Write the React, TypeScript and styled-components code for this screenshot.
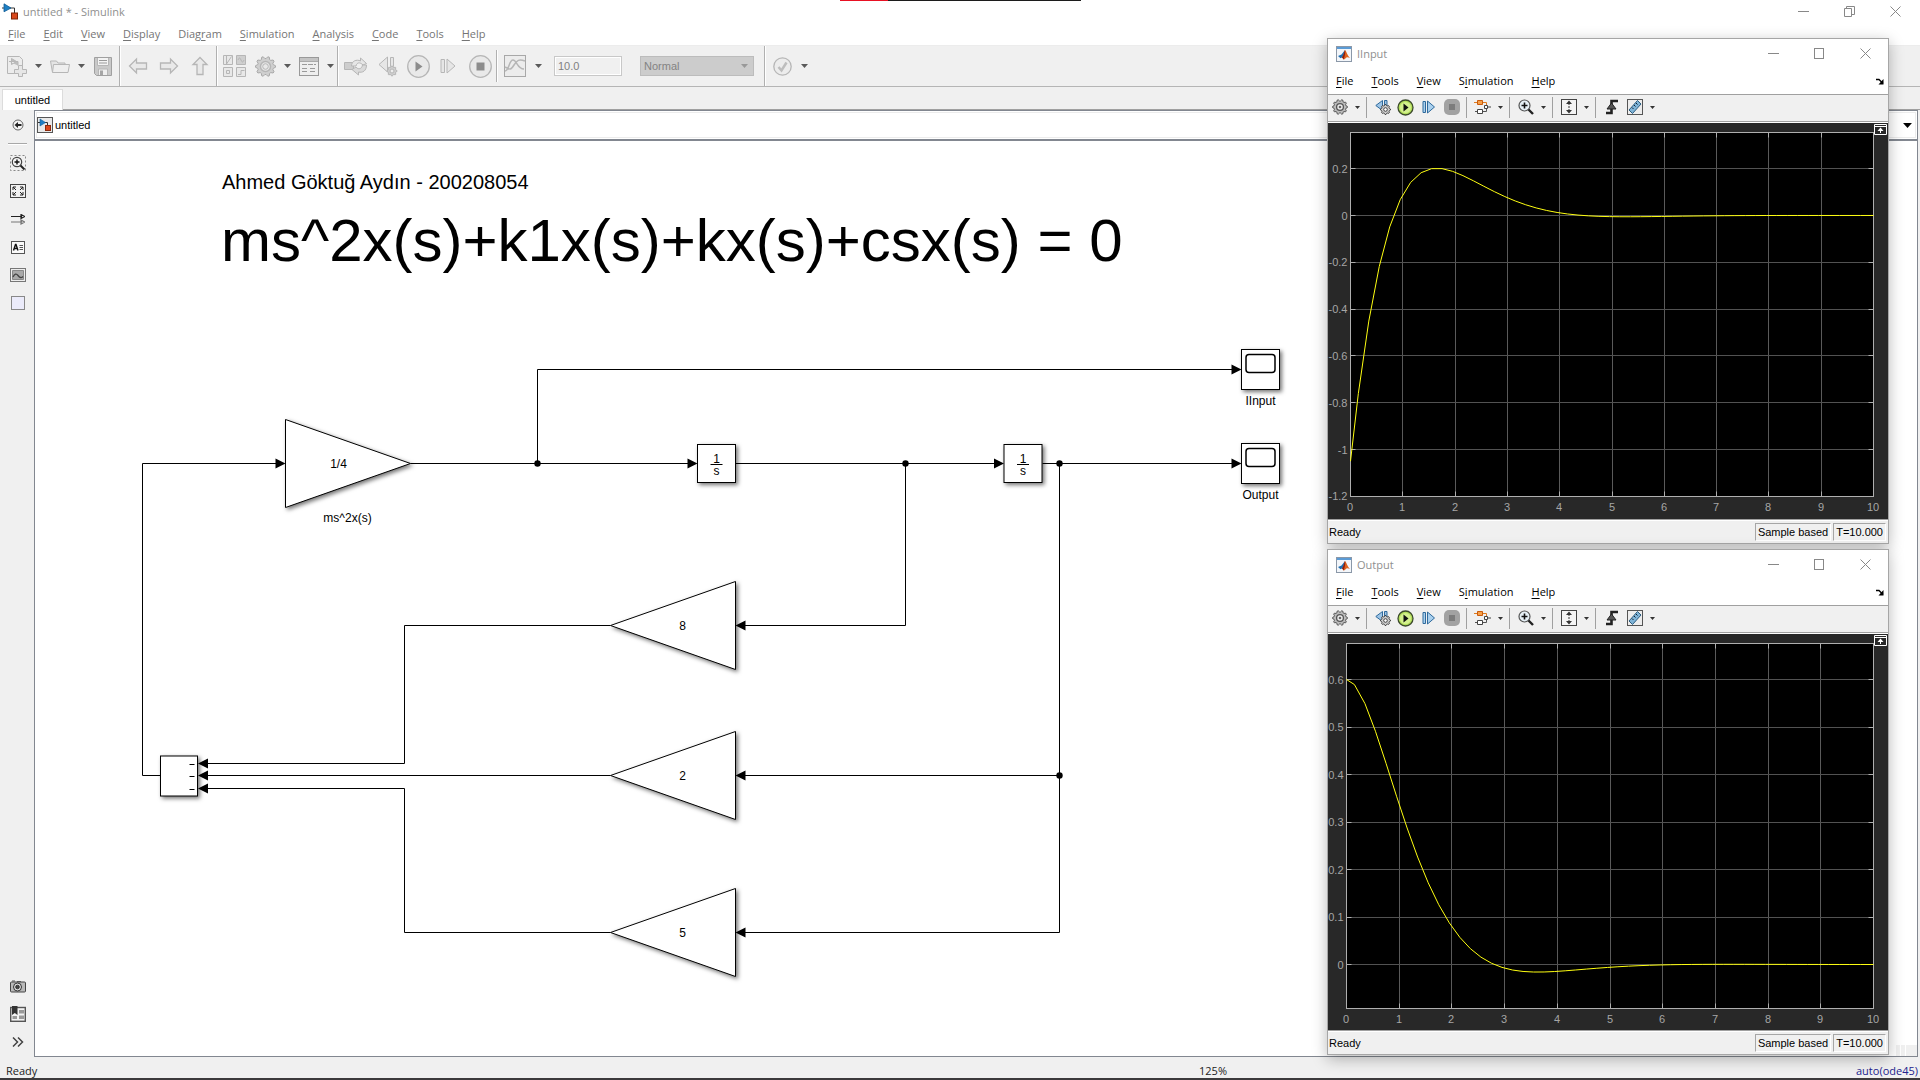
import React from "react";
import styled, { createGlobalStyle } from "styled-components";

const UI_FONT = '"Open Sans", "Noto Sans", sans-serif';
const SMALL_FONT = '"Liberation Sans", Arial, sans-serif';
const FRAME = "#828790";
const FACE = "#f0f0f0";

const GlobalStyle = createGlobalStyle`
  *, *::before, *::after { box-sizing: border-box; }
  body { margin: 0; background: #fff; font-family: ${UI_FONT}; font-size: 11px; overflow: hidden; }
  button, input, select { font: inherit; margin: 0; }
  svg { display: block; flex: none; }
`;

/* ---------- main window ---------- */

const AppWindow = styled.div`
  position: relative;
  display: flex;
  flex-direction: column;
  height: 100vh;
  background: ${FACE};
`;

const TopStrip = styled.div`
  position: absolute;
  top: 0;
  left: 840px;
  display: flex;
  width: 241px;
  height: 1px;
  background: #1c1c1c;
  &::before { content: ""; width: 48px; background: #e81123; }
`;

const TitleBar = styled.header`
  display: flex;
  align-items: center;
  gap: 5px;
  flex: none;
  background: #fff;
  color: #8f8f8f;
  line-height: 16px;
`;

const MainTitle = styled(TitleBar)`
  height: 23px;
  padding: 0 2px;
`;

const ScopeTitle = styled(TitleBar)`
  height: 29px;
  padding: 0 0 0 8px;
`;

const TitleText = styled.h1`
  margin: 0;
  font-size: 11px;
  font-weight: 400;
`;

const WindowButtons = styled.div`
  display: flex;
  margin-left: auto;
`;

const WindowButton = styled.button`
  display: flex;
  align-items: center;
  justify-content: center;
  width: 46px;
  height: 20px;
  padding: 0;
  border: 0;
  background: none;
`;

const MenuBar = styled.nav<{ $main?: boolean }>`
  display: flex;
  align-items: center;
  gap: 2px;
  flex: none;
  height: ${(p) => (p.$main ? 23 : 26)}px;
  border-bottom: ${(p) => (p.$main ? "1px solid #ececec" : "0")};
  background: #fff;
  color: ${(p) => (p.$main ? "#757575" : "#000")};
`;

const MenuItem = styled.button`
  padding: 0 8px;
  border: 0;
  background: none;
  color: inherit;
  line-height: 16px;
  u { text-underline-offset: 2px; }
`;

const DockArrow = styled.button`
  margin-left: auto;
  padding: 0 4px;
  border: 0;
  background: none;
`;

const MainToolbar = styled.div`
  display: flex;
  align-items: center;
  flex: none;
  height: 41px;
  padding-left: 1px;
  border-bottom: 1px solid #b5b5b5;
`;

const ToolButton = styled.button<{ $w: number }>`
  display: flex;
  align-items: center;
  justify-content: center;
  flex: none;
  width: ${(p) => p.$w}px;
  height: 24px;
  padding: 0;
  border: 0;
  background: none;
`;

const GroupLine = styled.span<{ $short?: boolean }>`
  flex: none;
  align-self: ${(p) => (p.$short ? "center" : "stretch")};
  width: 2px;
  height: ${(p) => (p.$short ? "32px" : "auto")};
  margin: 0 ${(p) => (p.$short ? 0 : 1)}px;
  border-left: 1px solid #b0b0b0;
  border-right: 1px solid #fff;
`;

const StopTime = styled.input`
  width: 68px;
  height: 20px;
  margin: 0 18px 0 10px;
  padding: 0 3px;
  border: 1px solid #c8c8c8;
  border-radius: 0;
  background: ${FACE};
  box-shadow: inset 0 0 0 1px #fff;
  color: #808080;
  font-family: ${SMALL_FONT};
`;

const ModeBox = styled.div`
  display: grid;
  align-items: center;
  width: 114px;
  height: 20px;
  margin-right: 9px;
  > * { grid-area: 1 / 1; }
  > svg { justify-self: end; margin-right: 6px; pointer-events: none; }
`;

const ModeSelect = styled.select`
  appearance: none;
  width: 114px;
  height: 20px;
  padding: 0 3px;
  border: 1px solid #bcbcbc;
  border-radius: 0;
  background: #ccc;
  color: #838383;
  opacity: 1;
  font-family: ${SMALL_FONT};
`;

const TabRow = styled.div`
  display: flex;
  align-items: flex-end;
  flex: none;
  height: 23px;
  padding-left: 2px;
  font-family: ${SMALL_FONT};
  &::after { content: ""; flex: 1; border-bottom: 1px solid #a0a0a0; }
`;

const Tab = styled.button`
  width: 61px;
  height: 21px;
  padding: 0;
  border: 1px solid #dcdcdc;
  border-bottom: 0;
  background: #fff;
  color: #000;
`;

const Workspace = styled.div`
  display: flex;
  flex: 1;
  min-height: 0;
  padding-right: 2px;
`;

const Palette = styled.aside`
  display: flex;
  flex-direction: column;
  align-items: center;
  flex: none;
  width: 34px;
  padding: 1px 0 1px 1px;
`;

const PaletteButton = styled.button`
  display: flex;
  align-items: center;
  justify-content: center;
  flex: none;
  width: 28px;
  height: 28px;
  padding: 0;
  border: 0;
  background: none;
`;

const PaletteLine = styled.span`
  width: 19px;
  height: 2px;
  margin: 4px 0;
  border-top: 1px solid #a8a8a8;
  border-bottom: 1px solid #fff;
`;

const PaletteGap = styled.span`
  flex: 1;
`;

const Editor = styled.main`
  display: flex;
  flex-direction: column;
  flex: 1;
  min-width: 0;
  border: 1px solid ${FRAME};
  background: #fff;
`;

const Breadcrumb = styled.div`
  flex: none;
  padding: 1px;
  border-bottom: 2px solid ${FRAME};
`;

const BreadcrumbInner = styled.div`
  display: flex;
  align-items: center;
  gap: 2px;
  height: 26px;
  padding: 0 2px 0 0;
  border: 1px solid #ececec;
  font-family: ${SMALL_FONT};
  > button { margin-left: auto; }
`;

const Canvas = styled.section`
  flex: 1;
  min-height: 0;
  overflow: hidden;
  display: grid;
  > * { grid-area: 1 / 1; }
`;

const Grip = styled.span`
  place-self: end;
  display: flex;
  gap: 1px;
  height: 11px;
  > i { width: 4px; background: ${FACE}; }
  > i:last-child { width: 11px; }
`;

const StatusBar = styled.footer`
  display: grid;
  grid-template-columns: 1fr auto 1fr;
  align-items: end;
  flex: none;
  height: 23px;
  padding: 0 2px 0 6px;
  border-bottom: 2px solid #3c3a3c;
  color: #222;
  line-height: 14px;
`;

const Zoom = styled.span`
  grid-column: 2;
  padding-left: 502px;
`;

const Solver = styled.a`
  justify-self: end;
  color: #23238e;
  text-decoration: none;
`;

/* ---------- scope windows ---------- */

const ScopeWindow = styled.section<{ $top: number }>`
  position: absolute;
  top: ${(p) => p.$top}px;
  right: 31px;
  display: flex;
  flex-direction: column;
  width: 562px;
  border: 1px solid #a6a6a6;
  background: ${FACE};
  box-shadow: 0 4px 14px rgba(0, 0, 0, 0.28);
`;

const ScopeToolbar = styled.div`
  display: flex;
  align-items: center;
  height: 29px;
  padding-bottom: 3px;
  border-top: 1px solid #a0a0a0;
  border-bottom: 1px solid #fff;
  box-shadow: inset 0 -1px 0 #a0a0a0;
`;

const ScopeLine = styled.span`
  width: 8px;
  height: 21px;
  background: linear-gradient(#a0a0a0, #a0a0a0) 3px 0 / 1px 100% no-repeat;
`;

const ScopeStatus = styled.div`
  display: flex;
  align-items: center;
  gap: 2px;
  height: 24px;
  padding: 1px 2px 0 1px;
  border-top: 1px solid #a0a0a0;
  box-shadow: inset 0 1px 0 #fff;
  color: #000;
  font-family: ${SMALL_FONT};
`;

const StatusCell = styled.span`
  height: 18px;
  padding: 0 2px;
  border: 1px solid #fff;
  border-top-color: #a6a6a6;
  border-left-color: #a6a6a6;
  line-height: 16px;
  &:first-of-type { margin-left: auto; }
`;

/* ---------- icons ---------- */

const Caret = ({ c = "#555", w = 7 }: { c?: string; w?: number }) => (
  <svg width={w} height={(w + 1) / 2} viewBox="0 0 8 4.5" aria-hidden="true">
    <path d="M0 0h8L4 4.5z" fill={c} />
  </svg>
);

const Icon = ({ w = 22, h = 22, children }: { w?: number; h?: number; children: React.ReactNode }) => (
  <svg width={w} height={h} viewBox={`0 0 ${w} ${h}`} fill="none" stroke="#b6b6b6" aria-hidden="true">
    {children}
  </svg>
);

const gearPath = (cx: number, cy: number, r: number, depth: number, teeth: number) => {
  const pts: string[] = [];
  for (let i = 0; i < teeth * 4; i++) {
    const a = ((i - 0.5) / (teeth * 4)) * Math.PI * 2;
    const rad = i % 4 < 2 ? r : r - depth;
    pts.push(`${(cx + Math.cos(a) * rad).toFixed(2)} ${(cy + Math.sin(a) * rad).toFixed(2)}`);
  }
  return `M${pts.join("L")}Z`;
};

const SimulinkLogo = ({ boxed }: { boxed?: boolean }) =>
  boxed ? (
    <Icon w={16} h={16}>
      <rect x=".5" y=".5" width="15" height="15" fill="#e9e9e9" stroke="#555" />
      <path d="M1 5.500h9.500v4" stroke="#333" />
      <path d="M3 2v7l5.500-3.500z" fill="#1d7fc4" stroke="#0f5c95" strokeWidth=".6" />
      <rect x="8.500" y="8.500" width="5" height="5" fill="#d9481c" stroke="#8c2a0c" />
    </Icon>
  ) : (
    <Icon w={16} h={17}>
      <path d="M0 5h12.500v5" stroke="#333" />
      <path d="M2 .8v8L9 5z" fill="#1d7fc4" stroke="#0f5c95" strokeWidth=".8" />
      <rect x="9.500" y="10" width="6" height="6" fill="#d9481c" stroke="#7c2408" />
    </Icon>
  );

const MatlabLogo = () => (
  <Icon w={16} h={16}>
    <rect x=".5" y=".5" width="15" height="15" fill="#f3f6fa" stroke="#8b98a8" />
    <path d="M1 1h14v2H1z" fill="#5b9bd5" stroke="none" />
    <path d="M2 10l3.500-1.500L9 4l-1 8-2-.5-1.500.8z" fill="#1f6fb2" stroke="none" />
    <path d="M9 4c1.500 1 2.500 6 5 8-1.500-.5-2.500-1-3.500-.5S8.500 14 7.500 13.500C7 13 7 12 6 11.500 8 9 8 6 9 4z" fill="#e0641e" stroke="none" />
    <path d="M9 4c.5 2 .2 6-1.500 9.500C7 13 7 12 6 11.500 8 9 8 6 9 4z" fill="#8e1f10" stroke="none" />
  </Icon>
);

const MinIcon = () => <Icon w={11} h={11}><path d="M0 5.500h11" stroke="#888" /></Icon>;
const MaxIcon = () => <Icon w={11} h={11}><rect x=".5" y=".5" width="9" height="10" stroke="#888" /></Icon>;
const RestoreIcon = () => (
  <Icon w={11} h={11}><path d="M.5 2.500h7v8h-7zM2.500 2.500v-2h8v8h-3" stroke="#888" /></Icon>
);
const CloseIcon = () => <Icon w={11} h={11}><path d="M.5.5l10 10M10.500.5l-10 10" stroke="#888" /></Icon>;

const NewModel = () => (
  <Icon>
    <path d="M1.500 1.500h12l3 3v14h-15z" fill="#ececec" />
    <path d="M3 6.500h9v4M5.500 3.500v6l5-3z" fill="#bdbdbd" />
    <path d="M12.500 10.500h4v4h4v4h-4v3h-4v-3h-4v-4h4z" fill="#e6e6e6" />
  </Icon>
);
const OpenFolder = () => (
  <Icon>
    <path d="M3.500 17.500l-2-11.500h6l1.500 2h7v2" fill="#e4e4e4" />
    <path d="M3.500 17.500l1-8h16l-1.500 8z" fill="#eee" />
  </Icon>
);
const Save = () => (
  <Icon w={18} h={19}>
    <path d="M.5.5h17v18h-15l-2-2z" fill="#c9c9c9" stroke="#a0a0a0" />
    <path d="M3.500 1v7.500h11V1" fill="#f3f3f3" />
    <path d="M5 3.500h8M5 6h8" stroke="#999" />
    <path d="M4.500 18v-6h9v6" fill="#eee" /><path d="M6 13.500h3V18H6z" fill="#a5a5a5" stroke="none" />
  </Icon>
);
const Arrow = ({ turn }: { turn: number }) => (
  <Icon w={20} h={20}>
    <path transform={`rotate(${turn} 10 10)`} d="M1.500 10l7-7v4h10v6h-10v4z" fill="#e9e9e9" strokeWidth="1.300" />
  </Icon>
);
const Library = () => (
  <Icon w={23} h={22}>
    <path d="M.5.5h9v9h-9zM.5 12.500h9v9h-9zM13.500 12.500h9v9h-9z" fill="#e8e8e8" />
    <path d="M13.500.5h9v9h-9z" fill="#cfcfcf" />
    <path d="M3.500 1v8l5-7.500M15 5q1.500-4 3 0t3 0M15 19.500h3v-4h3.500" />
    <path d="M3.500 15.500h3v3h-3z" />
  </Icon>
);
const Gear = () => (
  <Icon w={21} h={21}>
    <path d={gearPath(10.5, 10.5, 10, 2, 10)} fill="#cfcfcf" stroke="#a8a8a8" />
    <circle cx="10.500" cy="10.500" r="5" fill="#e8e8e8" strokeWidth="1.500" /><circle cx="10.500" cy="10.500" r="2.800" />
  </Icon>
);
const Explorer = () => (
  <Icon w={20} h={19}>
    <rect x=".5" y=".5" width="19" height="18" fill="#eee" stroke="#999" />
    <path d="M1 1h18v3.500H1z" fill="#c4c4c4" stroke="none" />
    <path d="M1 4.500h18" stroke="#aaa" />
    <path d="M3 7.500h14M3 11.500h6M11 11.500h6M3 14.500h6M11 14.500h6" stroke="#9a9a9a" strokeDasharray="5 1" />
  </Icon>
);
const FastRestart = () => (
  <Icon w={25} h={20}>
    <path d="M1.500 6.500h9v7h-9z" fill="#cdcdcd" />
    <path d="M8.500 10c0-5 5-7 9-5V2l6 5.500-3.500 1.500c-3-3-6-3-7 1z" fill="#e6e6e6" />
    <path d="M23.500 9c0 6-4 8-8 7v3l-6.500-5.500 4-2.500c2 3 6 2 6.500-2z" fill="#dadada" />
  </Icon>
);
const StepBack = () => (
  <Icon w={20} h={22}>
    <path d="M9.500 2v15l-8.500-7.500zM12.500 2.500h3v9h-3z" fill="#e6e6e6" />
    <path d={gearPath(14, 16, 5, 1.2, 8)} fill="#d0d0d0" /><circle cx="14" cy="16" r="2" fill="#eee" />
  </Icon>
);
const Play = () => (
  <Icon w={23} h={23}>
    <circle cx="11.500" cy="11.500" r="10.800" fill="#e9e9e9" strokeWidth="1.300" />
    <path d="M8.500 6.500v10l7-5z" fill="#8c8c8c" stroke="none" />
  </Icon>
);
const StepForward = () => (
  <Icon w={16} h={18}><path d="M1 2.500h3.500v13H1zM7 2v14l8-7z" fill="#e6e6e6" /></Icon>
);
const Stop = () => (
  <Icon w={23} h={23}>
    <circle cx="11.500" cy="11.500" r="10.800" fill="#e9e9e9" strokeWidth="1.300" />
    <path d="M7.500 7.500h8v8h-8z" fill="#8c8c8c" stroke="none" />
  </Icon>
);
const Inspector = () => (
  <Icon w={22} h={22}>
    <rect x=".5" y=".5" width="21" height="21" fill="#ececec" stroke="#a8a8a8" />
    <path d="M1 16C5 16 5 5 9 5s4 9 11 9M1 12c5 3 6 3 9-2s5-6 11-4" strokeWidth="1.500" />
  </Icon>
);
const Check = () => (
  <Icon w={19} h={19}>
    <circle cx="9.500" cy="9.500" r="8.700" fill="#ececec" strokeWidth="1.300" />
    <path d="M5.500 10l3 3.500 5-8" stroke="#bdbdbd" strokeWidth="2.500" />
  </Icon>
);

const ScopeGear = () => (
  <Icon w={16} h={16}>
    <path d={gearPath(8, 8, 7.4, 1.4, 10)} fill="#bbb" stroke="#555" />
    <circle cx="8" cy="8" r="3.400" fill="#eee" stroke="#555" strokeWidth="1.300" /><circle cx="8" cy="8" r="1.300" fill="#666" stroke="none" />
  </Icon>
);
const ScopeStepBack = () => (
  <Icon w={16} h={16}>
    <path d="M7.500 1.500v10L.8 6.500zM9.500 1.500h2.500v6H9.500z" fill="#9cc4e6" stroke="#2f6a9c" />
    <path d={gearPath(10.5, 10.5, 5, 1, 8)} fill="#ccc" stroke="#444" /><circle cx="10.500" cy="10.500" r="1.800" fill="#fff" stroke="#444" />
  </Icon>
);
const ScopePlay = () => (
  <Icon w={17} h={17}>
    <circle cx="8.500" cy="8.500" r="7.500" fill="#b4e05c" stroke="#3c4a2c" strokeWidth="1.300" />
    <circle cx="8.500" cy="8.500" r="5.500" fill="#d4f08e" stroke="none" />
    <path d="M6.500 4.500v8l5-4z" fill="#111" stroke="none" />
  </Icon>
);
const ScopeStep = () => (
  <Icon w={14} h={14}><path d="M1 1.500h2.500v11H1zM5.500 1v12l7-6z" fill="#a9d0ee" stroke="#2f6a9c" /></Icon>
);
const ScopeStop = () => (
  <Icon w={16} h={16}>
    <rect width="16" height="16" rx="5" fill="#a2a2a2" stroke="none" />
    <path d="M5 5h6v6H5z" fill="#7c7c7c" stroke="none" />
  </Icon>
);
const ScopeHighlight = () => (
  <Icon w={17} h={16}>
    <path d="M0 3.500h12.500v3" stroke="#e07a1e" />
    <path d="M1 12.500h11.500v-3" stroke="#555" />
    <path d="M3.500 1.500h5v4h-5z" fill="#f7a14a" stroke="#c85a0c" />
    <path d="M3.500 10.500h5v4h-5zM10.500 6.500h3v3h-3zM14 8h3" fill="#fff" stroke="#444" />
  </Icon>
);
const Magnifier = () => (
  <Icon w={16} h={16}>
    <circle cx="6.500" cy="6.500" r="5.500" fill="#e6f0f6" stroke="#555" strokeWidth="1.200" />
    <path d="M3.500 6.500h6M6.500 3.500v6" stroke="#111" strokeWidth="1.600" />
    <path d="M10.500 10.500l4.500 4.500" stroke="#222" strokeWidth="2.400" />
  </Icon>
);
const ScaleAxes = () => (
  <Icon w={16} h={16}>
    <rect x=".5" y=".5" width="15" height="15" fill="#f4f4f4" stroke="#444" />
    <path d="M8 1.500l3 3.500H5zM8 14.500l3-3.500H5z" fill="#333" stroke="none" />
    <path d="M8 4v8" stroke="#333" strokeDasharray="2 1" />
  </Icon>
);
const Trigger = () => (
  <Icon w={14} h={16}>
    <path d="M1 14h5.500V2H13" stroke="#222" strokeWidth="2.600" />
    <path d="M6.500 4l4.500 6H2z" fill="#555" stroke="#222" />
  </Icon>
);
const Ruler = () => (
  <Icon w={16} h={16}>
    <rect x=".5" y=".5" width="15" height="15" fill="#ededed" stroke="#555" />
    <path d="M2 11l8.500-9.500 3.500 3.500L5.500 14.500z" fill="#7fb4d8" stroke="#2c5d80" />
    <path d="M5 8.500l1.500 1.500M7 6l1.500 1.500M9 4l1.500 1.500" stroke="#123" />
  </Icon>
);
const DockIcon = () => (
  <Icon w={8} h={7}>
    <path d="M0 1.500h3l4 4" stroke="#000" strokeWidth="1.300" /><path d="M7.500 1v5.500H2.500z" fill="#000" stroke="none" />
  </Icon>
);

const BackCircle = () => (
  <Icon w={12} h={12}>
    <circle cx="6" cy="6" r="5" fill="#f4f4f4" stroke="#666" />
    <path d="M9.500 6h-5" stroke="#222" strokeWidth="2" /><path d="M2.500 6L6 3v6z" fill="#222" stroke="none" />
  </Icon>
);
const ZoomRegion = () => (
  <Icon w={16} h={16}>
    <rect x=".5" y=".5" width="15" height="15" stroke="#888" strokeDasharray="2 2" />
    <circle cx="7" cy="7" r="4.700" fill="#f4f4f4" stroke="#444" strokeWidth="1.200" />
    <path d="M4.500 7h5M7 4.500v5" stroke="#111" strokeWidth="1.400" /><path d="M10.500 10.500l4 4" stroke="#222" strokeWidth="2" />
  </Icon>
);
const FitView = () => (
  <Icon w={16} h={14}>
    <rect x=".5" y=".5" width="15" height="13" fill="#f2f2f2" stroke="#444" />
    <path d="M3 6V3h3M3 3l3 3M13 6V3h-3M13 3l-3 3M3 8v3h3M3 11l3-3M13 8v3h-3M13 11l-3-3" stroke="#222" />
  </Icon>
);
const SampleTime = () => (
  <Icon w={14} h={11}>
    <path d="M0 2.500h11M10 .5l3.500 2-3.500 2z" stroke="#222" strokeWidth="1.200" />
    <path d="M0 8h11M10 6l3.500 2-3.500 2z" stroke="#777" strokeWidth="1.200" />
  </Icon>
);
const Annotation = () => (
  <Icon w={14} h={13}>
    <rect x=".5" y=".5" width="13" height="12" fill="#fafafa" stroke="#555" />
    <path d="M2.500 9.500l2-6h.5l2 6M3 7.500h3.500" stroke="#111" strokeWidth="1.400" />
    <path d="M8.500 4.500h3.500M8.500 6.500h3.500M8.500 8.500h3.500" stroke="#555" />
  </Icon>
);
const ImageIcon = () => (
  <Icon w={16} h={14}>
    <rect x=".5" y=".5" width="15" height="13" fill="#eee" stroke="#777" />
    <path d="M2.500 2.500h11v9h-11z" fill="#a9a9a9" stroke="#888" />
    <path d="M3 9q2.500-5 5-1.500t5 1" stroke="#444" strokeWidth="1.300" />
  </Icon>
);
const AreaIcon = () => (
  <Icon w={14} h={14}><rect x=".5" y=".5" width="13" height="13" fill="#ebebfa" stroke="#888" /></Icon>
);
const Camera = () => (
  <Icon w={16} h={13}>
    <rect x=".5" y="2" width="15" height="10" rx="1" fill="#b9b9b9" stroke="#444" />
    <path d="M2 1h3M7 1.500h4" stroke="#555" />
    <circle cx="7.500" cy="7" r="4" fill="#ddd" stroke="#333" /><circle cx="7.500" cy="7" r="1.800" fill="#444" stroke="#333" />
  </Icon>
);
const ModelBrowser = () => (
  <Icon w={16} h={16}>
    <rect x=".7" y="1.500" width="14.600" height="13.800" fill="#f2f2f2" stroke="#555" strokeWidth="1.400" />
    <path d="M9 4h5v3.500H9zM9 9.500h5V13H9zM2.500 10h4.500v3H2.500z" fill="#999" stroke="none" />
    <path d="M2 0h5.500v9L4.800 7 2 9z" fill="#333" stroke="none" />
  </Icon>
);
const Expand = () => (
  <Icon w={12} h={10}><path d="M1 .5L5.500 5 1 9.500M6 .5L10.500 5 6 9.500" stroke="#444" strokeWidth="1.500" /></Icon>
);

/* ---------- block diagram ---------- */

const DiagramSvg = styled.svg`
  font-family: ${SMALL_FONT};
  font-size: 12px;
  .block { filter: drop-shadow(2px 2px 2px rgba(0, 0, 0, 0.55)); }
  .shape { fill: #fff; stroke: #000; }
  .wire { fill: none; stroke: #000; }
  .name { font-size: 20px; }
  .formula { font-size: 60px; }
`;

type Dir = "left" | "right";

const ArrowHead = ({ x, y, dir }: { x: number; y: number; dir: Dir }) => {
  const back = dir === "right" ? -10 : 10;
  return <path d={`M${x} ${y}l${back} -5v10z`} />;
};

const Gain = ({ x, y, dir, value, label }: { x: number; y: number; dir: Dir; value: string; label?: string }) => {
  const s = dir === "right" ? 1 : -1;
  return (
    <g textAnchor="middle">
      <g className="block">
        <path className="shape" d={`M${x} ${y - 44}v88l${s * 125} -44z`} />
      </g>
      <text x={x + s * 53} y={y + 4}>{value}</text>
      {label && <text x={x + s * 62} y={y + 58}>{label}</text>}
    </g>
  );
};

const Integrator = ({ x, y }: { x: number; y: number }) => (
  <g textAnchor="middle">
    <g className="block"><rect className="shape" x={x} y={y - 19} width="38" height="38" /></g>
    <text x={x + 19} y={y - 1}>1</text>
    <path className="wire" d={`M${x + 13} ${y + 1}h12`} />
    <text x={x + 19} y={y + 11}>s</text>
  </g>
);

const ScopeBlock = ({ x, y, label }: { x: number; y: number; label: string }) => (
  <g textAnchor="middle">
    <g className="block"><rect className="shape" x={x} y={y - 20} width="38" height="40" /></g>
    <rect className="wire" x={x + 4.5} y={y - 15} width="29" height="18" rx="3" strokeWidth="1.500" />
    <text x={x + 19} y={y + 35}>{label}</text>
  </g>
);

const Diagram = () => (
  <DiagramSvg width="1290" height="900" viewBox="35 141 1290 900" role="img" aria-label="Block diagram">
    <text className="name" x="222" y="189">Ahmed Göktuğ Aydın - 200208054</text>
    <text className="formula" x="221" y="261">ms^2x(s)+k1x(s)+kx(s)+csx(s) = 0</text>
    <g className="wire">
      <path d="M160.500 775.500H142.500V463.500H276" />
      <path d="M410.500 463.500H688M537.500 463.500V369.500H1232" />
      <path d="M735.500 463.500H995M1042.500 463.500H1232" />
      <path d="M905.500 463.500V625.500H745" />
      <path d="M1059.500 463.500V932.500H745M1059.500 775.500H745" />
      <path d="M610.500 625.500H404.500V763.500H207" />
      <path d="M610.500 775.500H207" />
      <path d="M610.500 932.500H404.500V788.500H207" />
    </g>
    {[[537.5, 463.5], [905.5, 463.5], [1059.5, 463.5], [1059.5, 775.5]].map(([cx, cy]) => (
      <circle key={`${cx}-${cy}`} cx={cx} cy={cy} r="3.200" />
    ))}
    <Gain x={285.5} y={463.5} dir="right" value="1/4" label="ms^2x(s)" />
    <Gain x={735.5} y={625.5} dir="left" value="8" />
    <Gain x={735.5} y={775.5} dir="left" value="2" />
    <Gain x={735.5} y={932.5} dir="left" value="5" />
    <Integrator x={697.5} y={463.5} />
    <Integrator x={1004} y={463.5} />
    <ScopeBlock x={1241.5} y={369.5} label="IInput" />
    <ScopeBlock x={1241.5} y={463.5} label="Output" />
    <g className="block"><rect className="shape" x="160.500" y="756" width="37" height="40" /></g>
    <path className="wire" d="M189.500 764.500h5M189.500 776.500h5M189.500 789.500h5" />
    <ArrowHead x={285.5} y={463.5} dir="right" />
    <ArrowHead x={697.5} y={463.5} dir="right" />
    <ArrowHead x={1004} y={463.5} dir="right" />
    <ArrowHead x={1241.5} y={369.5} dir="right" />
    <ArrowHead x={1241.5} y={463.5} dir="right" />
    <ArrowHead x={735.5} y={625.5} dir="left" />
    <ArrowHead x={735.5} y={775.5} dir="left" />
    <ArrowHead x={735.5} y={932.5} dir="left" />
    <ArrowHead x={198} y={763.5} dir="left" />
    <ArrowHead x={198} y={775.5} dir="left" />
    <ArrowHead x={198} y={788.5} dir="left" />
  </DiagramSvg>
);

/* ---------- scope plots ---------- */

/* 4x'' + 8x' + 7x = 0 with x(0) = 0.6 and x'(0) = 0 */
const W = Math.sqrt(0.75);
const position = (t: number) => 0.6 * Math.exp(-t) * (Math.cos(W * t) + Math.sin(W * t) / W);
const velocity = (t: number) => (-1.05 / W) * Math.exp(-t) * Math.sin(W * t);
const acceleration = (t: number) => -2 * velocity(t) - 1.75 * position(t);

const TIMES = [0, ...Array.from({ length: 50 }, (_, i) => Math.min(10, 0.15 + i * 0.2)), 10];

type PlotSpec = {
  left: number;
  bottom: number;
  zero: number;
  unit: number;
  ticks: number[];
  signal: (t: number) => number;
};

const PlotSvg = styled.svg`
  background: #282828;
  font-family: ${SMALL_FONT};
  font-size: 11px;
  text { fill: #a6a6a6; }
`;

const RIGHT = 545.5;
const TOP = 9.5;

const Plot = ({ left, bottom, zero, unit, ticks, signal }: PlotSpec) => {
  const px = (t: number) => left + ((RIGHT - left) * t) / 10;
  const snap = (v: number) => Math.floor(v) + 0.5;
  const py = (v: number) => zero - v * unit;
  const seconds = Array.from({ length: 11 }, (_, i) => i);
  return (
    <PlotSvg width="560" height="396" viewBox="0 0 560 396" role="img" aria-label="Signal over time">
      <rect x={left} y={TOP} width={RIGHT - left} height={bottom - TOP} fill="#000" />
      {seconds.slice(1, 10).map((s) => (
        <g key={s}>
          <path d={`M${snap(px(s))} ${TOP}V${bottom}`} stroke="#5a5a5a" />
          <path d={`M${snap(px(s))} ${TOP}v5M${snap(px(s))} ${bottom}v-5`} stroke="#afafaf" />
        </g>
      ))}
      {ticks.map((v) => (
        <g key={v}>
          <path d={`M${left} ${snap(py(v))}H${RIGHT}`} stroke="#525252" />
          <path d={`M${left} ${snap(py(v))}h5M${RIGHT} ${snap(py(v))}h-5`} stroke="#afafaf" />
          <text x={left - 3} y={Math.round(py(v)) + 4} textAnchor="end">{v}</text>
        </g>
      ))}
      <rect x={left} y={TOP} width={RIGHT - left} height={bottom - TOP} fill="none" stroke="#afafaf" />
      {seconds.map((s) => (
        <text key={s} x={Math.floor(px(s))} y={bottom + 14} textAnchor="middle">{s}</text>
      ))}
      <polyline
        points={TIMES.map((t) => `${px(t).toFixed(2)},${py(signal(t)).toFixed(2)}`).join(" ")}
        fill="none"
        stroke="#ffff11"
      />
      <path d="M546.500 1.500h12v10h-12zM546.500 3.500h12M552.500 10V6" fill="#282828" stroke="#fff" />
      <path d="M552.500 4.500l3 3.500h-6z" fill="#fff" />
    </PlotSvg>
  );
};

const PLOTS: { title: string; top: number; plot: PlotSpec }[] = [
  {
    title: "IInput",
    top: 38,
    plot: { left: 22.5, bottom: 373.5, zero: 92.5, unit: 234, ticks: [0.2, 0, -0.2, -0.4, -0.6, -0.8, -1, -1.2], signal: acceleration },
  },
  {
    title: "Output",
    top: 549,
    plot: { left: 18.5, bottom: 374.5, zero: 330.5, unit: 475, ticks: [0.6, 0.5, 0.4, 0.3, 0.2, 0.1, 0], signal: position },
  },
];

/* Each menu name is split around its underlined access key. */
const MAIN_MENU = [
  ["", "F", "ile"], ["", "E", "dit"], ["", "V", "iew"], ["", "D", "isplay"], ["Diag", "r", "am"],
  ["", "S", "imulation"], ["", "A", "nalysis"], ["", "C", "ode"], ["", "T", "ools"], ["", "H", "elp"],
];
const SCOPE_MENU = [["", "F", "ile"], ["", "T", "ools"], ["", "V", "iew"], ["S", "i", "mulation"], ["", "H", "elp"]];

const MenuItems = ({ items }: { items: string[][] }) => (
  <>
    {items.map(([before, key, after]) => (
      <MenuItem key={before + key + after}>{before}<u>{key}</u>{after}</MenuItem>
    ))}
  </>
);

const Tool = ({ label, w = 31, children }: { label: string; w?: number; children: React.ReactNode }) => (
  <ToolButton $w={w} aria-label={label}>{children}</ToolButton>
);

const Drop = ({ label, small }: { label: string; small?: boolean }) => (
  <ToolButton $w={12} aria-label={label}><Caret w={small ? 5 : 7} c={small ? "#333" : "#5a5a5a"} /></ToolButton>
);

const Scope = ({ title, top, plot }: { title: string; top: number; plot: PlotSpec }) => (
  <ScopeWindow $top={top} aria-label={title}>
    <ScopeTitle>
      <MatlabLogo />
      <TitleText as="h2">{title}</TitleText>
      <WindowButtons>
        <WindowButton aria-label="Minimize"><MinIcon /></WindowButton>
        <WindowButton aria-label="Maximize"><MaxIcon /></WindowButton>
        <WindowButton aria-label="Close"><CloseIcon /></WindowButton>
      </WindowButtons>
    </ScopeTitle>
    <MenuBar>
      <MenuItems items={SCOPE_MENU} />
      <DockArrow aria-label="Dock"><DockIcon /></DockArrow>
    </MenuBar>
    <ScopeToolbar>
      <Tool w={23} label="Configuration"><ScopeGear /></Tool>
      <Drop small label="Configuration options" />
      <ScopeLine />
      <Tool w={23} label="Step back"><ScopeStepBack /></Tool>
      <Tool w={23} label="Run"><ScopePlay /></Tool>
      <Tool w={23} label="Step forward"><ScopeStep /></Tool>
      <Tool w={23} label="Stop"><ScopeStop /></Tool>
      <ScopeLine />
      <Tool w={23} label="Highlight block"><ScopeHighlight /></Tool>
      <Drop small label="Highlight options" />
      <ScopeLine />
      <Tool w={23} label="Zoom"><Magnifier /></Tool>
      <Drop small label="Zoom options" />
      <ScopeLine />
      <Tool w={23} label="Scale axes"><ScaleAxes /></Tool>
      <Drop small label="Scale options" />
      <ScopeLine />
      <Tool w={23} label="Triggers"><Trigger /></Tool>
      <Tool w={23} label="Measurements"><Ruler /></Tool>
      <Drop small label="Measurement options" />
    </ScopeToolbar>
    <Plot {...plot} />
    <ScopeStatus>
      Ready
      <StatusCell>Sample based</StatusCell>
      <StatusCell>T=10.000</StatusCell>
    </ScopeStatus>
  </ScopeWindow>
);

export default function App() {
  return (
    <AppWindow>
      <GlobalStyle />
      <MainTitle>
        <SimulinkLogo />
        <TitleText>untitled * - Simulink</TitleText>
        <WindowButtons>
          <WindowButton aria-label="Minimize"><MinIcon /></WindowButton>
          <WindowButton aria-label="Restore"><RestoreIcon /></WindowButton>
          <WindowButton aria-label="Close"><CloseIcon /></WindowButton>
        </WindowButtons>
      </MainTitle>
      <TopStrip />
      <MenuBar $main><MenuItems items={MAIN_MENU} /></MenuBar>
      <MainToolbar>
        <Tool label="New model"><NewModel /></Tool>
        <Drop label="New options" />
        <Tool label="Open"><OpenFolder /></Tool>
        <Drop label="Open options" />
        <Tool label="Save"><Save /></Tool>
        <GroupLine />
        <Tool label="Back"><Arrow turn={0} /></Tool>
        <Tool label="Forward"><Arrow turn={180} /></Tool>
        <Tool label="Up"><Arrow turn={90} /></Tool>
        <GroupLine />
        <Tool label="Library browser"><Library /></Tool>
        <Tool label="Model configuration"><Gear /></Tool>
        <Drop label="Configuration options" />
        <Tool label="Model explorer"><Explorer /></Tool>
        <Drop label="Explorer options" />
        <GroupLine />
        <Tool label="Fast restart"><FastRestart /></Tool>
        <Tool w={34} label="Step back"><StepBack /></Tool>
        <Tool w={26} label="Run"><Play /></Tool>
        <Tool w={34} label="Step forward"><StepForward /></Tool>
        <Tool label="Stop"><Stop /></Tool>
        <GroupLine $short />
        <Tool w={34} label="Data inspector"><Inspector /></Tool>
        <Drop label="Inspector options" />
        <StopTime aria-label="Simulation stop time" defaultValue="10.0" disabled />
        <ModeBox>
          <ModeSelect aria-label="Simulation mode" disabled><option>Normal</option></ModeSelect>
          <Caret c="#999" />
        </ModeBox>
        <GroupLine />
        <Tool label="Check model"><Check /></Tool>
        <Drop label="Check options" />
      </MainToolbar>
      <TabRow><Tab>untitled</Tab></TabRow>
      <Workspace>
        <Palette>
          <PaletteButton aria-label="Hide browser"><BackCircle /></PaletteButton>
          <PaletteLine />
          <PaletteButton aria-label="Zoom"><ZoomRegion /></PaletteButton>
          <PaletteButton aria-label="Fit to view"><FitView /></PaletteButton>
          <PaletteButton aria-label="Sample time"><SampleTime /></PaletteButton>
          <PaletteButton aria-label="Annotation"><Annotation /></PaletteButton>
          <PaletteButton aria-label="Image"><ImageIcon /></PaletteButton>
          <PaletteButton aria-label="Area"><AreaIcon /></PaletteButton>
          <PaletteGap />
          <PaletteButton aria-label="Viewmarks"><Camera /></PaletteButton>
          <PaletteButton aria-label="Model browser"><ModelBrowser /></PaletteButton>
          <PaletteButton aria-label="More"><Expand /></PaletteButton>
        </Palette>
        <Editor>
          <Breadcrumb>
            <BreadcrumbInner>
              <SimulinkLogo boxed />
              <span>untitled</span>
              <ToolButton $w={12} aria-label="Path history"><Caret c="#000" w={9} /></ToolButton>
            </BreadcrumbInner>
          </Breadcrumb>
          <Canvas>
            <Diagram />
            <Grip><i /><i /><i /></Grip>
          </Canvas>
        </Editor>
      </Workspace>
      <StatusBar>
        <span>Ready</span>
        <Zoom>125%</Zoom>
        <Solver href="#solver">auto(ode45)</Solver>
      </StatusBar>
      {PLOTS.map((p) => <Scope key={p.title} {...p} />)}
    </AppWindow>
  );
}
